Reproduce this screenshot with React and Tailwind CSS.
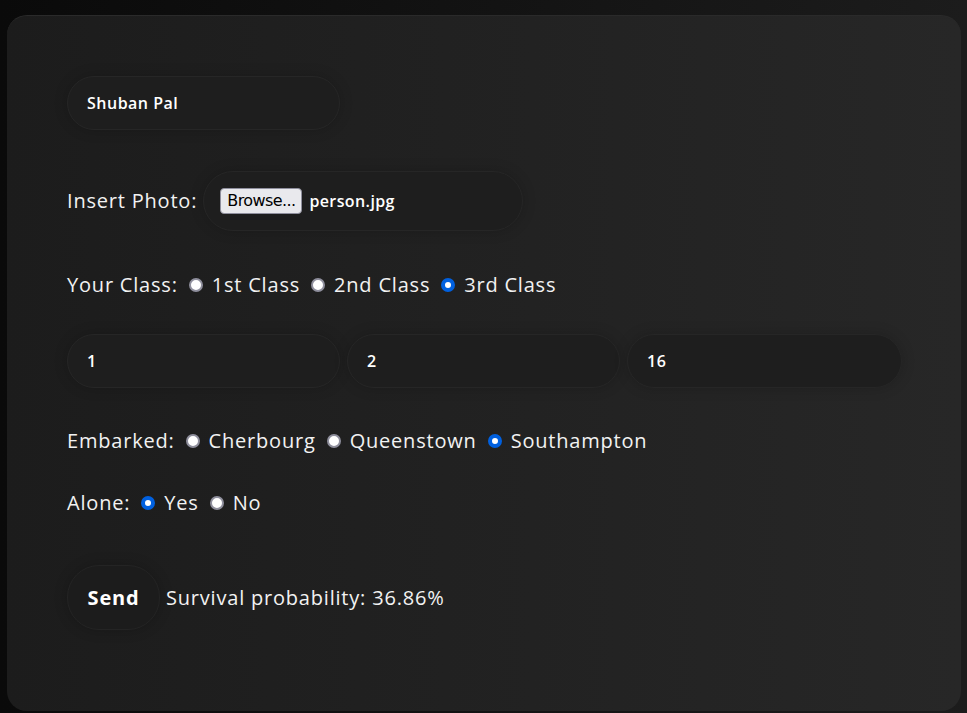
import React from "react";

const font = { fontFamily: '"Open Sans", "Noto Sans", sans-serif' };

function Radio({ checked }) {
  return checked ? (
    <span className="inline-block w-[14px] h-[14px] rounded-full border-[4px] border-[#0060df] bg-white shrink-0" />
  ) : (
    <span className="inline-block w-[14px] h-[14px] rounded-full border-2 border-[#8f8f9d] bg-white shrink-0" />
  );
}

function Option({ checked, label }) {
  return (
    <span className="flex items-center gap-[9px]">
      <Radio checked={checked} />
      <span>{label}</span>
    </span>
  );
}

function Field({ value, w = "w-[273px]" }) {
  return (
    <div
      className={`${w} h-[54px] rounded-[27px] bg-[#1e1e1e] border border-[#262626] shadow-[0_0_14px_rgba(0,0,0,0.18)] flex items-center pl-[19px] text-[16px] tracking-[0.5px] font-semibold text-white`}
    >
      {value}
    </div>
  );
}

export default function App() {
  return (
    <div
      className="w-[967px] h-[713px] bg-gradient-to-r from-[#0a0a0a] to-[#1c1c1c] pl-[7px] pr-[6px] pt-[15px]"
      style={font}
    >
      <div className="h-[696px] rounded-[20px] bg-gradient-to-r from-[#1c1c1c] to-[#272727] border-t border-[#2a2a2a] pl-[60px] pt-[60px] text-[#f2f2f2] text-[20px] tracking-[0.8px]">
        <Field value="Shuban Pal" />

        <div className="mt-[41px] flex items-center gap-[6px]">
          <span>Insert Photo:</span>
          <div className="w-[320px] h-[60px] rounded-[30px] bg-[#1e1e1e] border border-[#262626] shadow-[0_0_14px_rgba(0,0,0,0.18)] flex items-center pl-[16px] gap-[7px]">
            <span
              className="h-[26px] px-[6px] rounded-[4px] bg-[#e9e9ed] border border-[#8f8f9d] text-black text-[16px] flex items-center leading-none"
              style={{ fontFamily: '"DejaVu Sans", sans-serif', letterSpacing: "-0.6px" }}
            >
              Browse...
            </span>
            <span className="text-[16px] font-semibold tracking-[0.4px] text-white">person.jpg</span>
          </div>
        </div>

        <div className="mt-[42px] h-[24px] flex items-center gap-[11px]">
          <span>Your Class:</span>
          <Option label="1st Class" />
          <Option label="2nd Class" />
          <Option checked label="3rd Class" />
        </div>

        <div className="mt-[37px] flex gap-[7px]">
          <Field value="1" />
          <Field value="2" />
          <Field value="16" w="w-[275px]" />
        </div>

        <div className="mt-[41px] h-[24px] flex items-center gap-[11px]">
          <span>Embarked:</span>
          <Option label="Cherbourg" />
          <Option label="Queenstown" />
          <Option checked label="Southampton" />
        </div>

        <div className="mt-[38px] h-[24px] flex items-center gap-[11px]">
          <span>Alone:</span>
          <Option checked label="Yes" />
          <Option label="No" />
        </div>

        <div className="mt-[50px] flex items-center gap-[6px]">
          <div className="w-[93px] h-[65px] rounded-[32px] bg-[#1c1c1c] border border-[#242424] shadow-[0_0_14px_rgba(0,0,0,0.2)] flex items-center justify-center font-bold text-white">
            Send
          </div>
          <span>Survival probability: 36.86%</span>
        </div>
      </div>
    </div>
  );
}
